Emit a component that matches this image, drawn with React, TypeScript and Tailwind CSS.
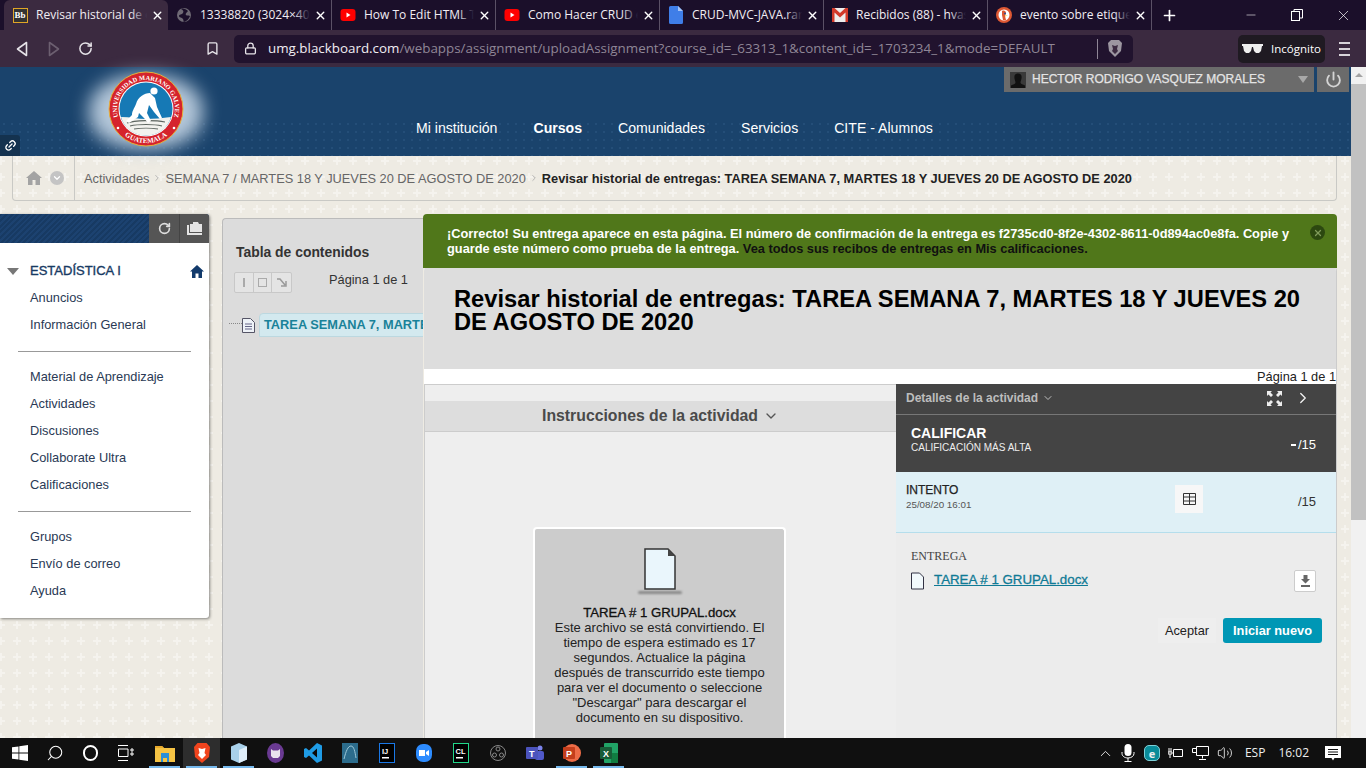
import { ChevronDown, ChevronRight, Link2, RotateCw, Power, Bookmark, Lock, X, Plus, Minus, Search, Volume2 } from 'lucide-react'

const beige = "bg-[#eeebe3] bg-[url('data:image/svg+xml,%3Csvg%20xmlns=%22http://www.w3.org/2000/svg%22%20width=%2216%22%20height=%2216%22%3E%3Cpath%20d=%22M7,4h2v3h3v2H9v3H7V9H4V7h3z%22%20fill=%22%23f5f3ee%22/%3E%3C/svg%3E')] bg-[position:-7px_6px]"

const Favicon = ({ kind }: { kind: string }) => {
  if (kind === 'bb') return (
    <span className="w-[15px] h-[15px] border border-[#e0a526] bg-[#333] text-white text-[9px] font-bold leading-[13px] text-center font-['Liberation_Serif',serif]">Bb</span>
  )
  if (kind === 'globe') return (
    <svg width="16" height="16" viewBox="0 0 16 16"><circle cx="8" cy="8" r="7" fill="#6f6a75" /><path d="M5 2c2 1 3 2 2 4S3 7 3 9s3 1 4 3 0 3 1 3c3-1 5-3 6-6-2-1-3 0-4-1s1-3 2-4C10 2 7 1 5 2z" fill="#1b0f2a" /></svg>
  )
  if (kind === 'yt') return (
    <svg width="16" height="16" viewBox="0 0 16 16"><rect x="0.5" y="2" width="15" height="12" rx="3" fill="#f00" /><path d="M6.5 5.5v5l4-2.500z" fill="#fff" /></svg>
  )
  if (kind === 'file') return (
    <svg width="14" height="18" viewBox="0 0 14 18"><path d="M0 1.500A1.500 1.500 0 011.500 0H9l5 5v11.500a1.500 1.500 0 01-1.500 1.500h-11A1.500 1.500 0 010 16.500z" fill="#3f7ee8" /><path d="M9 0l5 5H9z" fill="#a6c4f5" /></svg>
  )
  if (kind === 'gmail') return (
    <svg width="16" height="14" viewBox="0 0 16 14"><rect width="16" height="14" fill="#eee" /><path d="M0 0h2.500L8 5l5.500-5H16v14h-2.500V4.500L8 9.500 2.500 4.500V14H0z" fill="#d33a2c" /></svg>
  )
  return (
    <svg width="16" height="16" viewBox="0 0 16 16"><circle cx="8" cy="8" r="8" fill="#de5833" /><circle cx="8" cy="8" r="5.500" fill="#fff" /><path d="M6 4c2-1 4 0 4 2l-1 3 1 4H7L6 8z" fill="#de5833" /><circle cx="9" cy="6.500" r="1" fill="#2d4f8e" /><path d="M9 8.500h3l-3 1z" fill="#fdd20a" /></svg>
  )
}

const tabs = [
  { icon: 'bb', title: 'Revisar historial de entregas', active: true },
  { icon: 'globe', title: '13338820 (3024×4032)' },
  { icon: 'yt', title: 'How To Edit HTML Tags' },
  { icon: 'yt', title: 'Como Hacer CRUD en Java' },
  { icon: 'file', title: 'CRUD-MVC-JAVA.rar - Drive' },
  { icon: 'gmail', title: 'Recibidos (88) - hvasquez' },
  { icon: 'ddg', title: 'evento sobre etiquetas' },
]

const ChromeBar = () => (
  <div className="h-[30px] bg-[#1b0f2a] flex items-end pl-[4px] text-white font-['Open_Sans',sans-serif] text-[12px] shrink-0">
    {tabs.map((t, i) => (
      <div
        key={i}
        className={`w-[164px] h-[30px] flex items-center pl-[8px] pr-[4px] ${t.active ? 'bg-[#3b2a40] rounded-t-[6px]' : 'border-r border-[#5b5166]'}`}
      >
        <span className="w-[16px] mr-[8px] flex justify-center shrink-0"><Favicon kind={t.icon} /></span>
        <span className="flex-1 overflow-hidden whitespace-nowrap relative text-[#f1edf3]">
          {t.title}
          <span className={`absolute right-0 top-0 bottom-0 w-[16px] bg-gradient-to-r from-transparent ${t.active ? 'to-[#3b2a40]' : 'to-[#1b0f2a]'}`} />
        </span>
        <X size={13} strokeWidth={2.6} className="shrink-0 ml-[4px]" />
      </div>
    ))}
    <Plus size={17} strokeWidth={2.4} className="ml-[9px] mb-[6px]" />
    <div className="ml-auto flex h-[30px] items-center">
      <span className="w-[46px] flex justify-center"><Minus size={14} strokeWidth={1} /></span>
      <span className="w-[46px] flex justify-center">
        <svg width="12" height="12" viewBox="0 0 12 12" fill="none" stroke="#fff"><rect x="0.500" y="2.500" width="8" height="9" /><path d="M3 2.500V.5h8.500v8.500H8.500" /></svg>
      </span>
      <span className="w-[46px] flex justify-center"><X size={17} strokeWidth={1} /></span>
    </div>
  </div>
)

const Toolbar = () => (
  <div className="h-[37px] bg-[#3b2a40] flex items-center text-white shrink-0">
    <div className="w-[234px] h-full flex items-center shrink-0 pl-[16px] gap-[20px]">
      <svg width="12" height="16" viewBox="0 0 12 16" fill="none" stroke="#e6e3e8" strokeWidth="1.600"><path d="M10.500 1.500v13L1.500 8z" strokeLinejoin="round" /></svg>
      <svg width="12" height="16" viewBox="0 0 12 16" fill="none" stroke="#6c5f70" strokeWidth="1.600"><path d="M1.500 1.500v13l9-6.500z" strokeLinejoin="round" /></svg>
      <RotateCw size={15} strokeWidth={2.4} className="text-[#e6e3e8] -ml-[2px]" />
      <Bookmark size={15} strokeWidth={2.2} className="text-[#e6e3e8] ml-auto mr-[14px]" />
    </div>
    <div className="w-[899px] h-[28px] bg-[#21132e] rounded-[5px] flex items-center pl-[10px] font-['Open_Sans',sans-serif] text-[13.380px] whitespace-nowrap">
      <Lock size={13} strokeWidth={2.4} className="text-[#e6e3e8] mr-[11px]" />
      <span className="text-[#f1edf3]">umg.blackboard.com</span>
      <span className="text-[#8f8696]">/webapps/assignment/uploadAssignment?course_id=_63313_1&amp;content_id=_1703234_1&amp;mode=DEFAULT</span>
      <span className="ml-auto h-[20px] border-l border-[#8f8696] mr-[10px]" />
      <svg width="14" height="17" viewBox="0 0 14 17" className="mr-[11px]"><path d="M3 0h8l3 3-1 8-6 6-6-6-1-8z" fill="#9c96a0" /><path d="M4 5l3 1 3-1-1 4 1 2-3 3-3-3 1-2z" fill="#3b2a40" /></svg>
    </div>
    <div className="ml-[105px] w-[87px] h-[28px] bg-[#1f1a22] rounded-[5px] flex items-center gap-[8px] pl-[4px] text-[11.500px] font-['Open_Sans',sans-serif]">
      <svg width="21" height="9" viewBox="0 0 21 9" fill="#eee"><path d="M0 0h21v2l-1 0-1 5-2 2h-3l-2-2-1-4h-1L9 7 7 9H4L2 7 1 2H0z" /></svg>
      <span>Incógnito</span>
    </div>
    <div className="ml-[14px] flex flex-col gap-[4px]">
      <span className="w-[11px] h-[2px] bg-[#d8d4da]" />
      <span className="w-[11px] h-[2px] bg-[#d8d4da]" />
      <span className="w-[11px] h-[2px] bg-[#d8d4da]" />
    </div>
  </div>
)

const Logo = () => (
  <div className="relative w-[120px] h-[89px]">
    <div className="absolute left-[3px] top-[8px] w-[114px] h-[74px] rounded-[45%] bg-[#b4c7d9] blur-[9px]" />
    <svg width="76" height="76" viewBox="0 0 76 76" className="absolute left-[22px] top-[4px]">
      <defs>
        <path id="arcTop" d="M12.900 52.500A29 29 0 1 1 63.100 52.500" />
        <path id="arcBottom" d="M16 64A34 34 0 0 0 60 64" />
      </defs>
      <circle cx="38" cy="38" r="37" fill="#d5232c" stroke="#e3b23c" strokeWidth="1" />
      <circle cx="38" cy="38" r="27.500" fill="#fff" />
      <circle cx="38" cy="38" r="26.500" fill="#1679b5" />
      <path d="M13 46C22 46 30 48 38 48s16-1 25-2C60 57 50 64.500 38 64.500S16 57 13 46z" fill="#f2f2ee" />
      <path d="M19 52c8-3 28-3 38-1M22 55c8-2 24-2 32 0M26 58c6-1 18-1 24 0" fill="none" stroke="#5d6560" strokeWidth="1.100" />
      <circle cx="46" cy="20" r="3.600" fill="#fff" />
      <path d="M42 22C36 22 30 26 28 33c-2 5-4 7-4 11l-6 6 3 2 9-6 1-4 5 5 4 5 3-2-4-8 2-8 5 7 6 7 2-1-5-11-2-9z" fill="#fff" />
      <text fontFamily="'Liberation Serif',serif" fontSize="6.400" fontWeight="700" fill="#fff"><textPath href="#arcTop" startOffset="50%" textAnchor="middle">UNIVERSIDAD MARIANO GALVEZ</textPath></text>
      <text fontFamily="'Liberation Serif',serif" fontSize="7" fontWeight="700" fill="#fff"><textPath href="#arcBottom" startOffset="50%" textAnchor="middle">GUATEMALA</textPath></text>
      <circle cx="10" cy="57" r="1.300" fill="#fff" />
      <circle cx="66" cy="57" r="1.300" fill="#fff" />
    </svg>
  </div>
)

const navItems = ['Mi institución', 'Cursos', 'Comunidades', 'Servicios', 'CITE - Alumnos']

const Header = () => (
  <div className="h-[89px] bg-[#1a436c] relative flex shrink-0 pl-[86px]">
    <div className="absolute inset-x-0 bottom-0 h-[36px] bg-[radial-gradient(circle_at_center,#2a5680_1px,transparent_1.500px)] bg-[size:8px_8px] opacity-60" />
    <Logo />
    <div className="relative flex gap-[36px] ml-[210px] mt-[53px] h-[17px] text-[14.100px] text-white leading-[17px] whitespace-nowrap">
      {navItems.map(n => (
        <span key={n} className={n === 'Cursos' ? 'font-bold' : ''}>{n}</span>
      ))}
    </div>
    <div className="absolute left-[1004px] top-0 w-[310px] h-[25px] bg-[#6b6b6b] flex items-center pl-[6px] text-[12px] text-[#e4e4e4] whitespace-nowrap">
      <svg width="16" height="16" viewBox="0 0 16 16"><rect width="16" height="16" fill="#3a3a3a" /><path d="M8 1.500c3 0 4 2 3.500 5-.3 2-1 3-1 4 0 1.500 2.500 2 4.500 3v2.500H1V13.500c2-1 4.500-1.500 4.500-3 0-1-.7-2-1-4C4 3.500 5 1.500 8 1.500z" fill="#111" /></svg>
      <span className="ml-[6px] -mt-[2px] [-webkit-text-stroke:0.25px_#e4e4e4]">HECTOR RODRIGO VASQUEZ MORALES</span>
      <span className="absolute right-[6px] top-[9px] border-x-[5px] border-x-transparent border-t-[7px] border-t-[#a8a8a8]" />
    </div>
    <div className="absolute left-[1317px] top-0 w-[32px] h-[25px] bg-[#6b6b6b] flex items-center justify-center">
      <Power size={17} strokeWidth={2.6} className="text-[#d4d4d4]" />
    </div>
    <div className="absolute left-0 bottom-0 w-[20px] h-[21px] bg-[#14324f] rounded-tr-[3px] flex items-center justify-center">
      <Link2 size={13} strokeWidth={2.4} className="text-white -rotate-45" />
    </div>
  </div>
)

const Breadcrumb = () => (
  <div className="h-[46px] pl-[12px] pr-[14px] shrink-0">
    <div className="h-[45px] border-x border-b border-[#c9c9c5] rounded-b-[4px] flex items-center whitespace-nowrap text-[12.800px] text-[#666]">
      <div className="w-[62px] h-full flex items-center pl-[13px] gap-[8px] border-r border-[#c9c9c5] shrink-0">
        <svg width="16" height="14" viewBox="0 0 16 14" fill="#a3a3a3"><path d="M8 0l8 7h-2v7H9.500V9h-3v5H2V7H0z" /></svg>
        <span className="w-[14px] h-[14px] rounded-full bg-[#c4c4c4] flex items-center justify-center"><ChevronDown size={10} strokeWidth={3} className="text-white" /></span>
      </div>
      <span className="ml-[9px] pt-[1px]">Actividades</span>
      <ChevronRight size={10} className="mx-[3px] text-[#aaa]" />
      <span className="pt-[1px]">SEMANA 7 / MARTES 18 Y JUEVES 20 DE AGOSTO DE 2020</span>
      <ChevronRight size={10} className="mx-[3px] text-[#aaa]" />
      <span className="font-bold text-[#222] pt-[1px]">Revisar historial de entregas: TAREA SEMANA 7, MARTES 18 Y JUEVES 20 DE AGOSTO DE 2020</span>
    </div>
  </div>
)

const menuGroups = [
  ['Anuncios', 'Información General'],
  ['Material de Aprendizaje', 'Actividades', 'Discusiones', 'Collaborate Ultra', 'Calificaciones'],
  ['Grupos', 'Envío de correo', 'Ayuda'],
]

const Sidebar = () => (
  <div className="w-[209px] shrink-0 h-[404px] rounded-r-[3px] shadow-[1px_1px_3px_rgba(0,0,0,0.45)] bg-white flex flex-col">
    <div className="h-[29px] flex rounded-tr-[3px] overflow-hidden bg-[#173a63] bg-[repeating-linear-gradient(135deg,#173a63_0_2px,#1c4270_2px_4px)]">
      <div className="flex-1" />
      <div className="w-[30px] bg-[#555] flex items-center justify-center"><RotateCw size={13} strokeWidth={3} className="text-[#ddd]" /></div>
      <div className="w-[30px] bg-[#555] border-l border-[#444] flex items-center justify-center">
        <svg width="15" height="13" viewBox="0 0 15 13"><path d="M0 3h2v8h13v2H0z M3 2h3V0h5l1 2h3v8H3z" fill="#e4e4e4" /></svg>
      </div>
    </div>
    <div className="flex items-center h-[20px] mt-[18px] pl-[7px] pr-[5px]">
      <span className="border-x-[6px] border-x-transparent border-t-[7px] border-t-[#777]" />
      <span className="ml-[11px] text-[13px] text-[#173a63] [-webkit-text-stroke:0.35px_#173a63]">ESTADÍSTICA I</span>
      <svg width="14" height="13" viewBox="0 0 14 13" fill="#123a6b" className="ml-auto"><path d="M7 0l7 6.500h-2V13H8.500V8.500h-3V13H2V6.500H0z" /></svg>
    </div>
    <div className="px-[18px] text-[12.800px] text-[#2a3a55] mt-[10px]">
      {menuGroups.map((g, i) => (
        <div key={i} className={i < 2 ? 'border-b border-[#999] pb-[6px] mb-[18px]' : ''}>
          {g.map(item => (
            <div key={item} className="h-[27px] leading-[14px] pl-[12px]">{item}</div>
          ))}
        </div>
      ))}
    </div>
  </div>
)

const Toc = () => (
  <div className="w-[201px] ml-[13px] mt-[4px] shrink-0 bg-[#dcdcdc] border-l border-t border-[#bbb] rounded-tl-[4px] overflow-hidden">
    <div className="pl-[13px] pt-[26px] text-[13.900px] font-bold text-[#333] leading-[15px] whitespace-nowrap">Tabla de contenidos</div>
    <div className="flex pl-[11px] pt-[7px] h-[36px]">
      <div className="h-[21px] w-[58px] mt-[5px] flex border border-[#c8c8c8] bg-[#e4e4e4] rounded-[2px] shrink-0">
        <span className="w-[19px] border-r border-[#c8c8c8] flex justify-center items-center"><span className="w-[2px] h-[9px] bg-[#aaa]" /></span>
        <span className="w-[19px] border-r border-[#c8c8c8] flex justify-center items-center"><span className="w-[9px] h-[9px] border border-[#aaa]" /></span>
        <span className="w-[19px] flex justify-center items-center">
          <svg width="10" height="9" viewBox="0 0 10 9" fill="none" stroke="#999" strokeWidth="1.500"><path d="M0 1h3l5 6M9 3v5H4" /></svg>
        </span>
      </div>
      <span className="ml-[37px] mt-[5px] text-[12.800px] text-[#333] leading-[16px] whitespace-nowrap">Página 1 de 1</span>
    </div>
    <div className="flex items-center mt-[17px] whitespace-nowrap ml-[6px] w-[400px]">
      <span className="w-[13px] shrink-0 border-t border-dotted border-[#888] -mt-[4px]" />
      <svg width="13" height="15" viewBox="0 0 13 15" className="mr-[4px] shrink-0"><path d="M.5.500h8l4 4v10H.500z" fill="#eef2f7" stroke="#556" /><path d="M3 6h7M3 8.500h7M3 11h7" stroke="#668" /></svg>
      <span className="shrink-0 bg-[#d3e9ef] border border-[#bcd8e0] rounded-tl-[4px] pl-[4px] pr-[20px] h-[24px] leading-[22px] text-[12.800px] font-bold text-[#1a8299]">TAREA SEMANA 7, MARTES</span>
    </div>
  </div>
)

const DocIcon = ({ w, h }: { w: number; h: number }) => (
  <svg width={w} height={h} viewBox="0 0 32 42">
    <path d="M1 1h23l7 7v33H1z" fill="#eaf6fc" stroke="#333" strokeWidth="1.500" />
    <path d="M24 1v7h7z" fill="#444" />
  </svg>
)

const Viewer = () => (
  <div className="w-[472px] shrink-0 border-l border-[#ccc] flex flex-col bg-[#eee]">
    <div className="h-[17px] border-t border-[#ccc]" />
    <div className="h-[31px] bg-[#ddd] border-b border-[#ccc] flex items-center justify-center gap-[5px] text-[15.800px] font-bold text-[#4a4a4a] leading-none">
      Instrucciones de la actividad
      <ChevronDown size={16} strokeWidth={2} className="text-[#555]" />
    </div>
    <div className="ml-[108px] mt-[95px] w-[253px] flex-1 border-2 border-b-0 border-white rounded-t-[4px] bg-[#ccc] flex flex-col items-center text-[13px] leading-[15px] text-[#222] text-center px-[18px] pt-[19px]">
      <div className="flex flex-col items-center">
        <DocIcon w={32} h={42} />
        <span className="w-[44px] h-[3px] rounded-full bg-[#888] blur-[1px] mt-[1px]" />
      </div>
      <div className="mt-[11px] text-[13.200px] text-[#111] whitespace-nowrap [-webkit-text-stroke:0.3px_#111]">TAREA # 1 GRUPAL.docx</div>
      <div>Este archivo se está convirtiendo. El tiempo de espera estimado es 17 segundos. Actualice la página después de transcurrido este tiempo para ver el documento o seleccione "Descargar" para descargar el documento en su dispositivo.</div>
    </div>
  </div>
)

const Details = () => (
  <div className="flex-1 flex flex-col bg-[#ececec]">
    <div className="h-[31px] bg-[#444] border-b border-[#777] flex items-center pl-[10px] pr-[24px] text-[12px] font-bold text-[#bdbdbd] pb-[2px]">
      Detalles de la actividad
      <ChevronDown size={12} strokeWidth={2} className="ml-[4px]" />
      <svg width="15" height="15" viewBox="0 0 15 15" fill="#eee" className="ml-auto"><path d="M0 0h5L3.500 1.500 6 4 4 6 1.500 3.500 0 5zM15 0v5l-1.500-1.500L11 6 9 4l2.500-2.500L10 0zM0 15v-5l1.500 1.500L4 9l2 2-2.500 2.500L5 15zM15 15h-5l1.500-1.500L9 11l2-2 2.500 2.500L15 10z" /></svg>
      <ChevronRight size={18} strokeWidth={1.800} className="text-[#eee] ml-[12px]" />
    </div>
    <div className="h-[57px] bg-[#444] flex items-start pl-[15px] pr-[20px] pt-[10px] text-white">
      <div>
        <div className="text-[14px] font-bold leading-[16px]">CALIFICAR</div>
        <div className="text-[10px] leading-[14px] text-[#eee]">CALIFICACIÓN MÁS ALTA</div>
      </div>
      <div className="ml-auto mt-[12px] text-[13px] leading-[16px] flex items-center">
        <span className="w-[5px] h-[2.500px] bg-white mr-[2px]" />/15
      </div>
    </div>
    <div className="h-[61px] bg-[#dff0f6] border-b border-[#b5deec] flex pl-[10px] pr-[20px] pt-[11px] relative">
      <div>
        <div className="text-[12px] leading-[14px] text-[#222] [-webkit-text-stroke:0.25px_#222]">INTENTO</div>
        <div className="text-[9.800px] leading-[16px] text-[#555]">25/08/20 16:01</div>
      </div>
      <div className="absolute left-[279px] top-[13px] w-[28px] h-[28px] bg-[#f7f7f7] flex items-center justify-center">
        <svg width="13" height="12" viewBox="0 0 13 12" fill="none" stroke="#333"><path d="M.5.500h12v11H.500zM.5 4h12M.5 8h12M6.500.5v11" /></svg>
      </div>
      <div className="ml-auto mt-[11px] text-[13px] leading-[16px] text-[#333]">/15</div>
    </div>
    <div className="pl-[15px] pr-[20px] pt-[16px]">
      <div className="font-['Liberation_Serif',serif] text-[12px] leading-[14px] text-[#444]">ENTREGA</div>
      <div className="flex items-center mt-[7px]">
        <svg width="13" height="18" viewBox="0 0 13 18" className="shrink-0"><path d="M.5 1h8l4 4v12H.5z" fill="#f2f9fc" stroke="#334" /></svg>
        <a className="ml-[10px] -mt-[2px] text-[13.300px] text-[#0f7a95] underline [-webkit-text-stroke:0.3px_#0f7a95]">TAREA # 1 GRUPAL.docx</a>
        <span className="ml-auto w-[22px] h-[22px] bg-white border border-[#ccc] rounded-[2px] flex items-center justify-center">
          <svg width="11" height="12" viewBox="0 0 11 12" fill="#666"><path d="M3.500 0h4v4H10L5.500 8.500 1 4h2.500zM1 10h9v2H1z" /></svg>
        </span>
      </div>
    </div>
    <div className="flex justify-end pr-[14px] mt-[26px] gap-[7px]">
      <span className="h-[25px] w-[58px] bg-[#eee] flex items-center justify-center text-[12.800px] text-[#222]">Aceptar</span>
      <span className="h-[25px] w-[99px] bg-[#0097b5] rounded-[3px] flex items-center justify-center text-[12.800px] font-bold text-white">Iniciar nuevo</span>
    </div>
  </div>
)

const Main = () => (
  <div className="w-[914px] shrink-0 flex flex-col min-h-0">
    <div className="h-[54px] bg-[#50771a] rounded-t-[4px] relative px-[24px] pt-[12px] text-[12.800px] leading-[15px] font-bold text-white shrink-0">
      ¡Correcto! Su entrega aparece en esta página. El número de confirmación de la entrega es f2735cd0-8f2e-4302-8611-0d894ac0e8fa. Copie y guarde este número como prueba de la entrega. <span className="text-[#111]">Vea todos sus recibos de entregas en Mis calificaciones.</span>
      <span className="absolute right-[12px] top-[11px] w-[15px] h-[15px] rounded-full bg-[#2c4810] flex items-center justify-center"><X size={10} strokeWidth={3} className="text-[#7f9a5a]" /></span>
    </div>
    <div className="flex-1 min-h-0 ml-px flex flex-col bg-white border-r border-[#ccc] rounded-t-[4px] overflow-hidden -mt-[1px]">
      <div className="h-[102px] bg-[#ddd] border-t border-[#f4f4f4] pl-[30px] pr-[30px] pt-[20px] text-[23.700px] leading-[23px] font-bold text-black shrink-0">
        Revisar historial de entregas: TAREA SEMANA 7, MARTES 18 Y JUEVES 20 DE AGOSTO DE 2020
      </div>
      <div className="h-[15px] text-right text-[12.800px] leading-[15px] text-[#222] shrink-0 overflow-visible">Página 1 de 1</div>
      <div className="flex flex-1 min-h-0">
        <Viewer />
        <Details />
      </div>
    </div>
  </div>
)

const Scrollbar = () => (
  <div className="w-[15px] bg-[#f1f1f1] flex flex-col items-center shrink-0">
    <span className="mt-[6px] border-x-[4px] border-x-transparent border-b-[4px] border-b-[#a3a3a3]" />
    <div className="w-full h-[436px] bg-[#c1c1c1] mt-[7px]" />
  </div>
)

const taskIcons = [
  <svg key="exp" width="20" height="18" viewBox="0 0 20 18"><path d="M0 2h7l2 2h11v14H0z" fill="#f5c344" /><path d="M0 2h7l2 2H0z" fill="#e8a92c" /><path d="M6 9h8v9h-2v-4H8v4H6z" fill="#2a8fd8" /></svg>,
  <svg key="brave" width="16" height="20" viewBox="0 0 16 20"><path d="M3.500 0h9L16 4l-1 10-7 6-7-6L0 4z" fill="#f1441d" /><path d="M4.500 5L8 6l3.500-1-1 5 1.500 2L8 16l-4-4 1.500-2z" fill="#fff" /></svg>,
  <svg key="box" width="16" height="20" viewBox="0 0 16 20"><path d="M8 0l8 3.500v13L8 20 0 16.500v-13z" fill="#a8d0ea" /><path d="M8 7l8-3.500v13L8 20z" fill="#dfeefa" /></svg>,
  <svg key="cat" width="17" height="20" viewBox="0 0 17 20"><ellipse cx="8.500" cy="10" rx="8.500" ry="10" fill="#6a3a92" /><path d="M4 6l2 1.500h5L13 6v7l-2 2H6l-2-2z" fill="#e9e2ee" /></svg>,
  <svg key="code" width="18" height="20" viewBox="0 0 18 20"><path d="M13 0l5 2.500v15L13 20 5 12.500 2 15l-2-1V6l2-1 3 2.500z" fill="#1f9ce6" /><path d="M13 5.500L8 10l5 4.500z" fill="#0b0b0b" /></svg>,
  <svg key="mysql" width="16" height="20" viewBox="0 0 16 20"><rect width="16" height="20" fill="#2c6c8c" /><path d="M2 16C4 8 6 3 9 3s4 6 5 12" fill="none" stroke="#9cc7d8" /></svg>,
  <svg key="ij" width="16" height="20" viewBox="0 0 16 20"><rect x=".5" y=".5" width="15" height="19" fill="#000" stroke="#1a78e6" /><rect x="3" y="14" width="7" height="1.500" fill="#fff" /><text x="3" y="11" fill="#fff" fontSize="7.500" fontWeight="700" fontFamily="'Liberation Sans',sans-serif">IJ</text></svg>,
  <svg key="zoom" width="16" height="20" viewBox="0 0 16 20"><rect y="1" width="16" height="18" rx="7" fill="#2d8cff" /><path d="M3 7h6v6H3zM10 9l3-2v6l-3-2z" fill="#fff" /></svg>,
  <svg key="cl" width="16" height="20" viewBox="0 0 16 20"><rect x=".5" y=".5" width="15" height="19" fill="#000" stroke="#21d789" /><rect x="3" y="14" width="7" height="1.500" fill="#fff" /><text x="2.500" y="11" fill="#fff" fontSize="7.500" fontWeight="700" fontFamily="'Liberation Sans',sans-serif">CL</text></svg>,
  <svg key="obs" width="16" height="20" viewBox="0 0 16 20" fill="none" stroke="#888"><circle cx="8" cy="10" r="7.500" /><circle cx="8" cy="6" r="2" /><circle cx="4.500" cy="12" r="2" /><circle cx="11.500" cy="12" r="2" /></svg>,
  <svg key="teams" width="18" height="20" viewBox="0 0 18 20"><circle cx="14" cy="5" r="2.500" fill="#7b83eb" /><rect x="9" y="8" width="9" height="9" rx="2" fill="#5059c9" /><rect y="4" width="12" height="12" rx="1" fill="#4b53bc" /><text x="3" y="13.500" fill="#fff" fontSize="9" fontWeight="700" fontFamily="'Liberation Sans',sans-serif">T</text></svg>,
  <svg key="ppt" width="18" height="20" viewBox="0 0 18 20"><circle cx="9" cy="10" r="9" fill="#ed6c47" /><rect y="4" width="12" height="12" rx="1" fill="#c43e1c" /><text x="3" y="13.500" fill="#fff" fontSize="9" fontWeight="700" fontFamily="'Liberation Sans',sans-serif">P</text></svg>,
  <svg key="xls" width="18" height="20" viewBox="0 0 18 20"><rect x="4" width="14" height="20" rx="1" fill="#21a366" /><rect x="11" y="10" width="7" height="10" fill="#107c41" /><rect y="4" width="12" height="12" rx="1" fill="#185c37" /><text x="3" y="13.500" fill="#fff" fontSize="9" fontWeight="700" fontFamily="'Liberation Sans',sans-serif">X</text></svg>,
]

const running = [0, 1, 2, 11, 12]

const Taskbar = () => (
  <div className="h-[30px] bg-[#101010] flex items-center text-white shrink-0">
    <div className="w-[36px] flex justify-center ml-[2px]">
      <svg width="16" height="16" viewBox="0 0 16 16" fill="#fff"><path d="M0 2.300l6.500-.9v6.200H0zM7.300 1.300L16 0v7.600H7.300zM0 8.400h6.500v6.200L0 13.700zM7.300 8.400H16V16l-8.700-1.200z" /></svg>
    </div>
    <div className="w-[34px] flex justify-center"><Search size={18} strokeWidth={1.400} className="-scale-x-100" /></div>
    <div className="w-[36px] flex justify-center"><span className="w-[15px] h-[16px] rounded-full border-2 border-white" /></div>
    <div className="w-[34px] flex justify-center">
      <svg width="17" height="16" viewBox="0 0 17 16" fill="none" stroke="#fff"><path d="M1 .5h10M1 15.500h10M1.500 4h9.500v7.500H1.500zM14 4h2v2h-2zM14 8h2v2h-2z" /></svg>
    </div>
    <div className="flex ml-[4px]">
      {taskIcons.map((ic, i) => (
        <div key={i} className={`w-[37px] h-[30px] flex items-center justify-center relative ${i === 1 ? 'bg-[#2d2d2d]' : ''}`}>
          {ic}
          {running.includes(i) && <span className="absolute left-[3px] right-[3px] bottom-0 h-[2px] bg-[#76b9ed]" />}
        </div>
      ))}
    </div>
    <div className="ml-auto flex items-center text-[12px] font-['Open_Sans',sans-serif] text-[#eee]">
      <ChevronDown size={17} strokeWidth={1.300} className="rotate-180 mr-[7px]" />
      <svg width="14" height="18" viewBox="0 0 14 18" fill="none" className="mr-[9px]"><rect x="3.500" y="0" width="7" height="12" rx="3.500" fill="#fff" /><path d="M1 8v1.500C1 12 3.500 14 7 14s6-2 6-4.500V8M7 14v3M3.500 17.500h7" stroke="#fff" /></svg>
      <span className="w-[16px] h-[16px] rounded-[5px] bg-[#0a8c99] border border-[#7fd0d8] flex items-center justify-center mr-[8px] text-[11px] font-bold leading-none">e</span>
      <svg width="16" height="12" viewBox="0 0 16 12" fill="none" stroke="#fff" className="mr-[8px]"><path d="M5.500 2.500h9v7h-9zM3 1v4M1 1v4M0 5h4v2H0zM2 7v4" /></svg>
      <svg width="17" height="14" viewBox="0 0 17 14" fill="none" stroke="#fff" className="mr-[8px]"><path d="M4.500.5h12v9h-12zM10.500 9.500v3M7 13.500h7M.5 2.500h4v4h-4z" /></svg>
      <Volume2 size={16} strokeWidth={1.300} className="mr-[12px]" />
      <span className="mr-[13px]">ESP</span>
      <span className="mr-[16px]">16:02</span>
      <svg width="16" height="15" viewBox="0 0 16 15" className="mr-[25px]"><path d="M0 0h16v12H9.500L8 14.500 6.500 12H0z" fill="#fff" /><path d="M3 3.500h10M3 6h10M3 8.500h10" stroke="#101010" /></svg>
    </div>
  </div>
)

export default function App() {
  return (
    <div className="w-[1366px] h-[768px] overflow-hidden flex flex-col font-['Liberation_Sans',sans-serif]">
      <ChromeBar />
      <Toolbar />
      <div className="flex-1 min-h-0 flex">
        <div className={`w-[1351px] shrink-0 flex flex-col min-h-0 ${beige}`}>
          <Header />
          <Breadcrumb />
          <div className="flex-1 min-h-0 flex mt-[12px]">
            <Sidebar />
            <Toc />
            <Main />
          </div>
        </div>
        <Scrollbar />
      </div>
      <Taskbar />
    </div>
  )
}
